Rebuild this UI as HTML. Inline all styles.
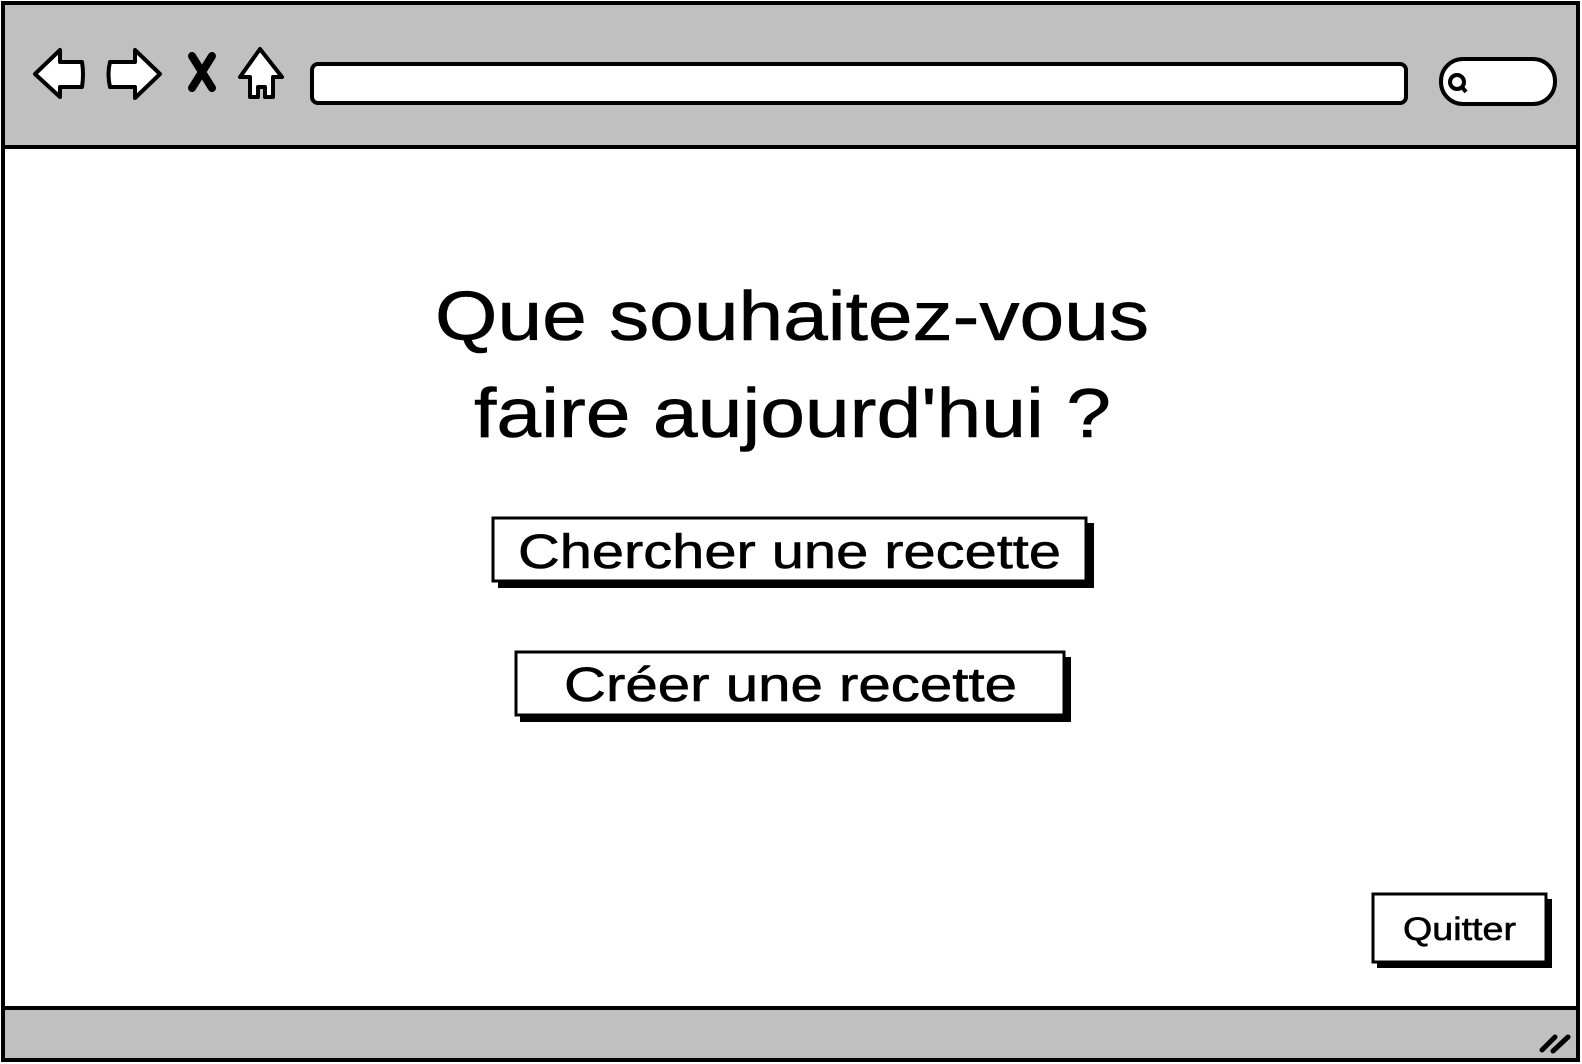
<!DOCTYPE html>
<html><head><meta charset="utf-8"><style>
html,body{margin:0;padding:0;background:#fff;width:1582px;height:1064px;overflow:hidden}
svg{position:absolute;left:0;top:0}
text{font-family:"Liberation Sans",sans-serif;fill:#000;stroke:#000;stroke-width:0.6}
</style></head><body>
<svg width="1582" height="1064" viewBox="0 0 1582 1064">
<rect x="3" y="3" width="1575" height="1057" fill="#fff" stroke="#000" stroke-width="4"/>
<rect x="5" y="5" width="1571" height="141" fill="#c0c0c0"/>
<line x1="3" y1="147" x2="1578" y2="147" stroke="#000" stroke-width="4"/>
<rect x="5" y="1009" width="1571" height="49" fill="#c0c0c0"/>
<line x1="3" y1="1008" x2="1578" y2="1008" stroke="#000" stroke-width="4"/>
<path d="M35 74 L60 50 L60 62 L82 62 Q84 74 82 87 L60 87 L60 97 Z" fill="#fff" stroke="#000" stroke-width="4" stroke-linejoin="round"/>
<path d="M160 74 L135 50 L135 62 L110 62 Q107 74 110 87 L135 87 L135 98 Z" fill="#fff" stroke="#000" stroke-width="4" stroke-linejoin="round"/>
<path d="M192 56 L212 88 M212 56 L192 88" stroke="#000" stroke-width="8" stroke-linecap="round"/>
<path d="M260 49 L282 77 L273 77 L273 97 L265 97 L265 87 L258 87 L258 97 L250 97 L250 77 L240 77 Z" fill="#fff" stroke="#000" stroke-width="4" stroke-linejoin="round"/>
<rect x="312" y="64" width="1094" height="39" rx="6" fill="#fff" stroke="#000" stroke-width="4"/>
<rect x="1441" y="59" width="114" height="45" rx="22" fill="#fff" stroke="#000" stroke-width="4"/>
<circle cx="1457" cy="82" r="7" fill="none" stroke="#000" stroke-width="4"/>
<line x1="1462" y1="87" x2="1466" y2="92" stroke="#000" stroke-width="4"/>
<text x="435" y="340" font-size="70" textLength="714" lengthAdjust="spacingAndGlyphs">Que souhaitez-vous</text>
<text x="474" y="437" font-size="70" textLength="637" lengthAdjust="spacingAndGlyphs">faire aujourd'hui ?</text>
<rect x="498" y="523" width="596" height="65" fill="#000"/>
<rect x="493" y="518" width="593" height="63" fill="#fff" stroke="#000" stroke-width="3"/>
<text x="518" y="568" font-size="48" textLength="543" lengthAdjust="spacingAndGlyphs">Chercher une recette</text>
<rect x="520" y="657" width="551" height="65" fill="#000"/>
<rect x="516" y="652" width="548" height="63" fill="#fff" stroke="#000" stroke-width="3"/>
<text x="564" y="701" font-size="48" textLength="453" lengthAdjust="spacingAndGlyphs">Créer une recette</text>
<rect x="1377" y="899" width="175" height="69" fill="#000"/>
<rect x="1373" y="894" width="173" height="68" fill="#fff" stroke="#000" stroke-width="3"/>
<text x="1403" y="940" font-size="32" stroke-width="0.3" textLength="113" lengthAdjust="spacingAndGlyphs">Quitter</text>
<path d="M1542 1050 L1555 1037 M1553 1051 L1568 1037" stroke="#000" stroke-width="5" stroke-linecap="round"/>
</svg>
</body></html>
